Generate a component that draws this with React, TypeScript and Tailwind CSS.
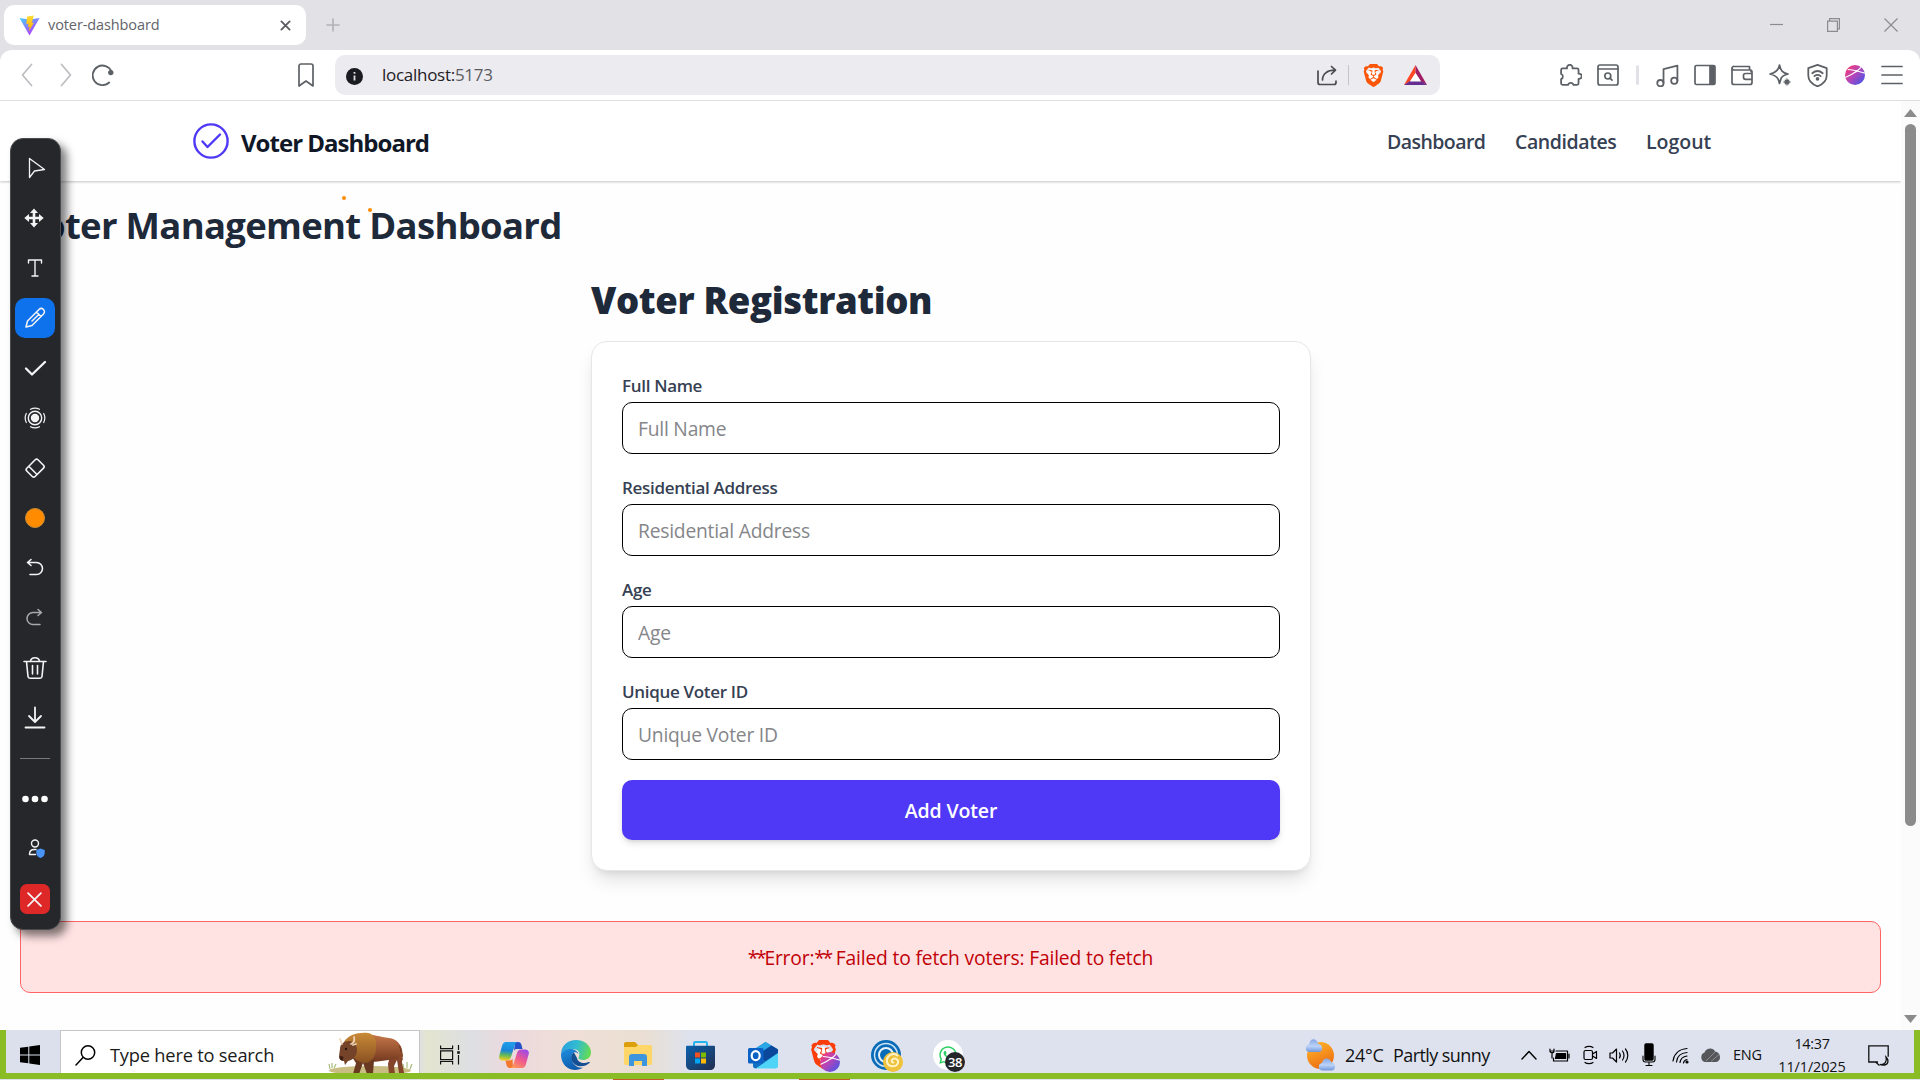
import type { ReactNode } from "react";
import { SiBrave } from "react-icons/si";
import { FaWhatsapp } from "react-icons/fa";

const stroke = { fill: "none", stroke: "currentColor", strokeLinecap: "round", strokeLinejoin: "round" } as const;

/* ---------- Browser chrome ---------- */

function ViteLogo() {
  return (
    <svg width="21" height="21" viewBox="0 0 21 21">
      <defs>
        <linearGradient id="viteA" x1="0" y1="0" x2="0.7" y2="1">
          <stop offset="0" stopColor="#41d1ff" />
          <stop offset="1" stopColor="#bd34fe" />
        </linearGradient>
        <linearGradient id="viteB" x1="0" y1="0" x2="0" y2="1">
          <stop offset="0" stopColor="#ffdd35" />
          <stop offset="1" stopColor="#ffa800" />
        </linearGradient>
      </defs>
      <path d="M0.5 3 L10.5 4.6 L20.6 3 L10.5 20.5 Z" fill="url(#viteA)" />
      <path d="M14.8 0.5 L8 1.6 L7.3 9.2 L9.6 8.8 L8.8 12 L10.6 11.6 L9.8 16.5 L15 7.6 L12.8 8 L14.8 0.5Z" fill="url(#viteB)" />
    </svg>
  );
}

function TabStrip() {
  return (
    <div className="flex h-[50px] items-start bg-[#e2e1e6] pl-1 pt-[5px]">
      <div className="flex h-10 w-[302px] items-center rounded-[10px] bg-white pl-[15px] pr-[15px]">
        <ViteLogo />
        <span className="ml-[8px] flex-1 whitespace-nowrap text-[14.5px] tracking-[-0.1px] text-[#62636a]">voter-dashboard</span>
        <svg width="11" height="11" viewBox="0 0 12 12" className="text-[#5c5d63]" {...stroke} strokeWidth="2">
          <path d="M1.5 1.5l9 9M10.5 1.5l-9 9" />
        </svg>
      </div>
      <svg width="14" height="14" viewBox="0 0 14 14" className="ml-5 mt-[13px] text-[#b2b1b6]" {...stroke} strokeWidth="1.6">
        <path d="M7 1v12M1 7h12" />
      </svg>
      <div className="ml-auto flex h-[40px] items-center gap-[44px] pr-[22px] text-[#8b8b90]">
        <svg width="13" height="13" viewBox="0 0 13 13" stroke="currentColor" strokeWidth="1.2"><path d="M0 5.5h13" /></svg>
        <svg width="13" height="14" viewBox="0 0 13 14" fill="none" stroke="currentColor" strokeWidth="1.2">
          <path d="M.6 3.1h9.8v10.3H.6zM2.6 3V.6h9.8v10.3h-2" />
        </svg>
        <svg width="14" height="14" viewBox="0 0 14 14" stroke="currentColor" strokeWidth="1.2"><path d="M.5.5l13 13M13.5.5l-13 13" /></svg>
      </div>
    </div>
  );
}

function Ico({ children, w = 22, sw = 1.7 }: { children: ReactNode; w?: number; sw?: number }) {
  return (
    <svg width={w} height={w} viewBox="0 0 22 22" {...stroke} strokeWidth={sw}>
      {children}
    </svg>
  );
}

function Cell({ children }: { children: ReactNode }) {
  return <div className="flex w-[37.5px] justify-center">{children}</div>;
}

function GradientBall({ size, id }: { size: number; id: string }) {
  return (
    <svg width={size} height={size} viewBox="0 0 22 22">
      <defs>
        <linearGradient id={id} x1="0" y1="0.1" x2="0.9" y2="0.9">
          <stop offset="0" stopColor="#fb3a6d" />
          <stop offset="0.5" stopColor="#b545b8" />
          <stop offset="1" stopColor="#4a55e6" />
        </linearGradient>
        <clipPath id={id + "c"}><circle cx="11" cy="11" r="11" /></clipPath>
      </defs>
      <circle cx="11" cy="11" r="11" fill={`url(#${id})`} />
      <g clipPath={`url(#${id}c)`} stroke="#fff" strokeWidth="1.2" fill="none">
        <path d="M0 14C6 11 13 8 18 2M3 5c6 0 12 2 19 4M9 9l6-3" />
      </g>
    </svg>
  );
}

function AddressBar() {
  return (
    <div className="bg-[#e2e1e6]">
      <div className="flex h-[51px] items-center rounded-t-[12px] border-b border-[#dfdfe3] bg-white text-[#5d6166]">
        <svg width="12" height="24" viewBox="0 0 12 24" className="ml-[21px] text-[#bcbdc0]" {...stroke} strokeWidth="1.7"><path d="M10.5 1.5L1.5 12l9 10.5" /></svg>
        <svg width="12" height="24" viewBox="0 0 12 24" className="ml-[27px] text-[#bcbdc0]" {...stroke} strokeWidth="1.7"><path d="M1.5 1.5l9 10.5-9 10.5" /></svg>
        <svg width="22" height="22" viewBox="0 0 22 22" className="ml-[20px]" {...stroke} strokeWidth="1.8">
          <path d="M19.5 7.5A9.8 9.8 0 1 0 17.2 18.5" />
          <circle cx="18.8" cy="8.6" r="1.8" fill="currentColor" />
        </svg>
        <svg width="16" height="24" viewBox="0 0 16 24" className="ml-[184px]" {...stroke} strokeWidth="1.7">
          <path d="M1 3a2 2 0 0 1 2-2h10a2 2 0 0 1 2 2v20l-7-5-7 5z" />
        </svg>
        <div className="ml-[21px] flex h-10 w-[1105px] items-center rounded-[10px] bg-[#ecebf0] pl-[11px] pr-[13px]">
          <svg width="17" height="17" viewBox="0 0 17 17" className="mt-0.5">
            <circle cx="8.5" cy="8.5" r="8.5" fill="#1b1c21" />
            <path d="M8.5 7.5v5M8.5 4v1.7" stroke="#dedee2" strokeWidth="1.8" />
          </svg>
          <span className="ml-[19px] flex-1 whitespace-nowrap text-[17px] tracking-[-0.28px] text-[#1f2024]">
            localhost:<span className="text-[#5b5c62]">5173</span>
          </span>
          <svg width="21" height="21" viewBox="0 0 21 21" className="text-[#4a4c52]" {...stroke} strokeWidth="1.7">
            <path d="M1 6v11.5a2 2 0 0 0 2 2h14a2 2 0 0 0 2-2V16M5.5 15C5.5 9 10 5.2 18 5.2M14.5 1.5l4 3.700-4 3.800" />
          </svg>
          <div className="ml-[10px] h-5 w-px bg-[#c4c4ca]" />
          <div className="relative ml-[13px] flex h-6 w-[22px] items-center justify-center">
            <div className="absolute h-3 w-3 rounded-full bg-white" />
            <SiBrave size={23} className="relative shrink-0 text-[#fb5607]" />
          </div>
          <svg width="23" height="20" viewBox="0 0 23 20" className="ml-[20px]">
            <path d="M11.5 0v8L6 16.5 0 20z" fill="#ff4724" />
            <path d="M11.5 0L23 20l-6-3.5L11.5 8z" fill="#9e1f63" />
            <path d="M0 20l6-4h11l6 4z" fill="#662d91" />
            <path d="M11.5 8l5.500 8.500H6z" fill="#fff" />
          </svg>
        </div>
        <div className="ml-auto flex items-center pr-[9px]">
          <Cell>
            <Ico w={23}><path d="M3.500 4.200h4.200a2.700 2.700 0 1 1 5.200 0h4.300a1.500 1.500 0 0 1 1.500 1.500v3.600a2.500 2.500 0 1 1 0 4.900v4.300a1.500 1.500 0 0 1-1.500 1.500h-3.500a2.500 2.500 0 0 0-4.900 0H3.500A1.500 1.500 0 0 1 2 18.500v-4a2.600 2.600 0 0 0 0-4.900V5.700a1.500 1.500 0 0 1 1.500-1.500z" /></Ico>
          </Cell>
          <Cell>
            <Ico><rect x="1" y="1" width="20" height="20" rx="2" /><path d="M1 5h20" /><circle cx="10.8" cy="12" r="3" /><path d="M13 14.200l2 2" /></Ico>
          </Cell>
          <div className="flex w-[22px] justify-center"><div className="h-5 w-[3px] rounded bg-[#e2e1e8]" /></div>
          <Cell><Ico w={23}><circle cx="4.2" cy="18.300" r="3" /><circle cx="17.5" cy="16" r="3" /><path d="M7.200 18V5l13.300-3.500V16" /></Ico></Cell>
          <Cell><Ico><rect x="1" y="1.500" width="20" height="19" rx="1.500" /><path d="M16 2h4v18h-4z" fill="currentColor" /></Ico></Cell>
          <Cell><Ico><path d="M20 7.500V6H3a2 2 0 0 1-2-2M18.500 6V2.500H3A1.700 1.700 0 0 0 1 4v14.500a2 2 0 0 0 2 2h16a2 2 0 0 0 2-2V8a2 2 0 0 0-2-2M21 9.500h-6.500a2 2 0 0 0-2 2v1.800a2 2 0 0 0 2 2H21" /></Ico></Cell>
          <Cell>
            <Ico>
              <path d="M10.500 1c1 5.500 3 7.800 8.500 9-3.500.8-5.500 1.800-6.800 4L10.500 19.500C9.500 14 7.500 11.500 1 10c6-1 8.500-3.500 9.500-9z" />
              <path d="M18 15v6M15 18h6M16.300 16.300l3.400 3.400M19.700 16.300l-3.400 3.400" strokeWidth="1.300" />
            </Ico>
          </Cell>
          <Cell>
            <Ico w={23}><path d="M11 .8l8.800 3.200v7c0 4.500-3.500 8.300-8.800 10.400C5.700 19.300 2.200 15.500 2.200 11V4z" /><path d="M6 8.800c3-2.500 7-2.500 10 0M8 11.600c2-1.600 4-1.600 6 0" /><circle cx="11" cy="14.300" r=".9" fill="currentColor" /></Ico>
          </Cell>
          <Cell><GradientBall size={20} id="ballTop" /></Cell>
          <Cell><Ico><path d="M1 2.500h20M1 11h20M1 19.500h20" /></Ico></Cell>
        </div>
      </div>
    </div>
  );
}

/* ---------- Web page ---------- */

const links = [
  { label: "Dashboard", cls: "w-[98px] tracking-[-0.55px]" },
  { label: "Candidates", cls: "w-[101px] tracking-[-0.42px]" },
  { label: "Logout", cls: "w-[65px] tracking-[0px]" },
];

function NavBar() {
  return (
    <nav className="flex h-20 shrink-0 items-center bg-white pl-[193px] pr-[190px] shadow-[0_1px_3px_rgba(0,0,0,0.14),0_1px_2px_rgba(0,0,0,0.1)]">
      <svg width="36" height="36" viewBox="0 0 36 36" className="text-[#4f39f6]" {...stroke} strokeWidth="2.4">
        <circle cx="18" cy="18" r="16.6" />
        <path d="M9.500 18.500l5 5.500L27 11.500" />
      </svg>
      <span className="ml-[12px] mt-[3px] whitespace-nowrap text-[24px] font-bold tracking-[-0.98px] text-[#101828]">Voter Dashboard</span>
      <div className="ml-auto mt-[2px] flex gap-[30px] text-[19.5px] font-semibold text-[#364153]">
        {links.map((l) => (
          <a key={l.label} className={"whitespace-nowrap " + l.cls}>{l.label}</a>
        ))}
      </div>
    </nav>
  );
}

const fields = ["Full Name", "Residential Address", "Age", "Unique Voter ID"];

function VoterForm() {
  return (
    <form className="flex h-[530px] w-[720px] flex-col rounded-[16px] border border-[#e5e7eb] bg-white px-[30px] pt-[30px] shadow-[0_12px_19px_-4px_rgba(0,0,0,0.12),0_5px_8px_-5px_rgba(0,0,0,0.12)]">
      {fields.map((f) => (
        <label key={f} className="flex h-[102px] flex-col">
          <span className="h-[30px] pt-px text-[17px] font-semibold leading-[25px] tracking-[-0.32px] text-[#364153]">{f}</span>
          <input
            placeholder={f}
            className="h-[52px] w-full rounded-[10px] border border-black bg-white px-[15px] pt-px text-[19.25px] tracking-[-0.22px] outline-none placeholder:text-[#85868a]"
          />
        </label>
      ))}
      <button type="button" className="h-[60px] w-full rounded-[10px] bg-[#4f39f6] pt-0.5 text-[19.5px] font-semibold tracking-[-0.15px] text-white shadow-[0_4px_7px_-1px_rgba(0,0,0,0.13),0_2px_4px_-2px_rgba(0,0,0,0.12)]">
        Add Voter
      </button>
    </form>
  );
}

function PageContent() {
  return (
    <main className="flex min-w-0 flex-1 flex-col overflow-hidden bg-[#fefefe]">
      <NavBar />
      <div className="flex flex-col px-5 pt-[19px]">
        <h1 className="h-[50px] whitespace-nowrap text-[36.5px] font-bold leading-[50px] tracking-[-0.7px] text-[#1e2939]">Voter Management Dashboard</h1>
        <div className="ml-[571px] mt-[25px] flex w-[720px] flex-col">
          <h2 className="h-[66px] whitespace-nowrap text-[36.5px] font-extrabold leading-[50px] tracking-[-0.36px] text-[#1e2939]">Voter Registration</h2>
          <VoterForm />
        </div>
        <div className="mt-[50px] flex h-[72px] w-[1861px] items-center justify-center rounded-[10px] border border-[#ff6467] bg-[#ffe2e2] pt-0.5 text-[19.25px] tracking-[-0.17px] text-[#c10007]">
          <p>
            <span className="tracking-[-2.3px]">**</span>Error:<span className="tracking-[-2.3px]">**</span> Failed to fetch voters: Failed to fetch
          </p>
        </div>
      </div>
    </main>
  );
}

function ScrollBar() {
  return (
    <div className="flex w-[19px] flex-col items-center bg-[#fbfbfb]">
      <svg width="13" height="8" viewBox="0 0 13 8" className="mt-[8px] shrink-0" fill="#8b8b8b"><path d="M6.500 0L13 8H0z" /></svg>
      <div className="mt-[7px] h-[702px] w-[11px] shrink-0 rounded-full bg-[#8b8b8b]" />
      <svg width="13" height="8" viewBox="0 0 13 8" className="mb-[7px] mt-auto shrink-0" fill="#8b8b8b"><path d="M6.500 8L0 0h13z" /></svg>
    </div>
  );
}

/* ---------- Annotation tool bar ---------- */

function Slot({ children }: { children: ReactNode }) {
  return <div className="flex h-[50px] items-center justify-center">{children}</div>;
}

function Tool({ children, sw = 1.6 }: { children: ReactNode; sw?: number }) {
  return (
    <Slot>
      <svg width="24" height="24" viewBox="0 0 24 24" {...stroke} strokeWidth={sw}>{children}</svg>
    </Slot>
  );
}

function AnnotationBar() {
  return (
    <div className="absolute left-[10px] top-[138px] h-[792px] w-[51px] rounded-[13px] border border-[#4b4c50] bg-[#26272b] pr-[2px] pt-[4px] text-[#f4f4f5] shadow-[6px_6px_9px_rgba(0,0,0,0.5)]">
      <Tool sw={1.3}><path d="M6.500 2.500v19l5-6.500 10-1.500z" /></Tool>
      <Slot>
        <svg width="20" height="20" viewBox="0 0 20 20" fill="currentColor" className="mr-0.5">
          <path d="M10 .5l4 4.500h-2.700v3.700H15V6l4.700 4-4.700 4v-2.700h-3.700V15H14l-4 4.500L6 15h2.700v-3.700H5V14L.3 10 5 6v2.700h3.700V5H6z" />
        </svg>
      </Slot>
      <Tool sw={1.4}><path d="M5.500 7V4h13v3M12 4v16M9 20h6" /></Tool>
      <Slot>
        <div className="flex h-10 w-10 shrink-0 items-center justify-center rounded-[10px] bg-[#0e72ed]">
          <svg width="24" height="24" viewBox="0 0 24 24" {...stroke} strokeWidth="1.5">
            <path d="M3 21l1.500-6L16 3.500c1.500-1.500 3.500-1 4.500 0s1.500 3 0 4.500L9 19.500zM13.500 6l4.500 4.500M16 8.200L9 15" />
          </svg>
        </div>
      </Slot>
      <Tool sw={2.3}><path d="M3 12.500l6 6L22 6" /></Tool>
      <Tool sw={1.2}>
        <circle cx="12" cy="12" r="3.6" fill="currentColor" />
        <circle cx="12" cy="12" r="6.7" strokeWidth="1.4" />
        <path d="M7.500 3.300a10 10 0 0 1 9 0M7.500 20.700a10 10 0 0 0 9 0M3.300 7.500a10 10 0 0 0 0 9M20.700 7.500a10 10 0 0 1 0 9" />
      </Tool>
      <Tool><path d="M3.800 12.200l8.400-8.400c.8-.8 2-.8 2.800 0L20.500 9.300c.8.800.8 2 0 2.800l-8.400 8.400c-.8.800-2 .8-2.800 0l-5.500-5.500c-.8-.8-.8-2 0-2.800zM6 10.500l8 8" /></Tool>
      <Slot><div className="h-5 w-5 rounded-full border border-[#c98b35] bg-[#ff8c00]" /></Slot>
      <Tool><path d="M8 3.500L4.500 6.500 8 9.500M5 6.500h8.500a5.700 5.700 0 0 1 0 12H7" /></Tool>
      <Slot>
        <svg width="24" height="24" viewBox="0 0 24 24" className="text-[#a9a9ad]" {...stroke} strokeWidth="1.5">
          <path d="M15 3.500L18.500 6.500 15 9.500M18 6.500h-8a5.700 5.700 0 0 0 0 12h7" />
        </svg>
      </Slot>
      <Tool><path d="M1 5.500h22M3.500 5.500L5 20.500c.1 1 .9 1.700 2 1.700h10c1.100 0 1.900-.7 2-1.700L20.500 5.500M7.500 5c.5-2.500 2.500-3.300 4.500-3.300S16 2.500 16.500 5M9.500 9.500V18M14.500 9.500V18" /></Tool>
      <Tool sw={1.8}><path d="M12 1.500v14M6 10l6 6 6-6M2.500 21.500h19" /></Tool>
      <div className="mx-auto mt-[15px] h-px w-[30px] bg-[#77787c]" />
      <div className="mt-[15px]" />
      <Slot>
        <svg width="26" height="8" viewBox="0 0 26 8" fill="#fff"><circle cx="3.5" cy="4" r="3.3" /><circle cx="13" cy="4" r="3.3" /><circle cx="22.5" cy="4" r="3.3" /></svg>
      </Slot>
      <Slot>
        <svg width="24" height="24" viewBox="0 0 24 24" {...stroke} strokeWidth="1.4">
          <circle cx="12" cy="6.5" r="3.5" />
          <path d="M13 12.500h-1.500c-3 0-5 1.500-5 4.500v.5h6" />
          <path d="M17.500 11.500l4.200 1.600v3c0 2.500-1.900 4.200-4.200 5-2.300-.8-4.200-2.500-4.200-5v-3z" fill="#4a94f8" stroke="none" />
        </svg>
      </Slot>
      <Slot>
        <div className="flex h-[30px] w-[30px] items-center justify-center rounded-[7px] bg-[#de2828]">
          <svg width="15" height="15" viewBox="0 0 14 14" {...stroke} strokeWidth="1.6"><path d="M1 1l12 12M13 1L1 13" /></svg>
        </div>
      </Slot>
    </div>
  );
}

/* ---------- Windows task bar ---------- */

function Bison() {
  return (
    <svg width="86" height="42" viewBox="0 0 86 42">
      <defs>
        <linearGradient id="bisonBody" x1="0" y1="0" x2="0" y2="1">
          <stop offset="0" stopColor="#c8784a" />
          <stop offset="1" stopColor="#73391f" />
        </linearGradient>
        <linearGradient id="bisonMane" x1="0" y1="0" x2="0" y2="1">
          <stop offset="0" stopColor="#c98a38" />
          <stop offset="1" stopColor="#8a5122" />
        </linearGradient>
      </defs>
      <ellipse cx="42" cy="38.500" rx="41" ry="4.500" fill="#c9bd83" />
      <path d="M2 37l-1-5M4 36V31M6 36l2-4M76 37l-1-5M79 36V30M82 37l2-5" stroke="#a9bd7a" strokeWidth="1.2" />
      <path d="M62 24l-2 8 1 10h6l-1-8 3-6 2 13h5l-2-11 1-8z" fill="#84452a" />
      <path d="M36 2c9 0 16 3 25 4 8 1 12 6 12 13 1 5-2 8-6 8-9 1-18 3-26 3z" fill="url(#bisonBody)" />
      <path d="M71 13c3 3 3 8 3 12M72 24l-1 3 3 0z" stroke="#8a4a2b" strokeWidth="1.5" fill="#4f2a1a" />
      <path d="M24 25l4 6-3 11h6l4-11 4 11h6l1-14z" fill="#6a3921" />
      <path d="M16 10c4-7 14-10 24-9 6 1 9 7 8 14 0 9-4 15-10 16-6 0-10-3-14-7z" fill="url(#bisonMane)" />
      <path d="M21 9c-5 0-9 3-9 8l-1 7c0 3 2 5 5 5l1 4 3-4c5-1 9-5 9-11 0-5-3-9-8-9z" fill="#75432a" />
      <path d="M14 12l-2-5M23 12c3-1 4-3 3-7M25 13l3-1" stroke="#efd2b4" strokeWidth="1.8" strokeLinecap="round" fill="none" />
      <circle cx="18" cy="17" r="1.2" fill="#27150e" />
      <path d="M11.500 25c1-2 4-1 4 1l-1 2.500c-2 0-3-1-3-3.500z" fill="#3c2015" />
    </svg>
  );
}

function TaskViewIcon() {
  return (
    <svg width="20" height="20" viewBox="0 0 20 20" fill="none" stroke="#111" strokeWidth="1.2">
      <path d="M.6.500v3.200h12V.500M.6 5.800h12v8.800H.6zM.6 19.500v-3h12v3M18.500 0v5M18.500 10v9.500" />
      <path d="M17.200 6.200h2.600v2.600h-2.600z" fill="#111" stroke="none" />
    </svg>
  );
}

function Copilot() {
  return (
    <svg width="30" height="30" viewBox="0 0 30 30">
      <defs>
        <linearGradient id="cpA" x1="0.3" y1="0" x2="0.2" y2="1"><stop offset="0.1" stopColor="#1f9be8" /><stop offset="0.45" stopColor="#1b86d8" /><stop offset="0.7" stopColor="#62b95a" /><stop offset="1" stopColor="#ffd01c" /></linearGradient>
        <linearGradient id="cpB" x1="0.8" y1="0" x2="0.2" y2="1"><stop offset="0" stopColor="#9a4bea" /><stop offset="0.5" stopColor="#f0598f" /><stop offset="1" stopColor="#ff9a55" /></linearGradient>
      </defs>
      <path d="M16 2h3c2 0 3 1 3.500 3l1 4h-5c-2 0-3 .500-3.500 2z" fill="#2351c9" />
      <path d="M7 2h12c-2 0-3 2-3.500 4L12 17c-.6 2-2 3.500-4 3.500H4c-3 0-4.500-2-3.600-5L3 6c.7-2.400 2-4 4-4z" fill="url(#cpA)" />
      <path d="M14 28h-3c-2 0-3-1-3.500-3l-1-4.500H10c2 0 3-1 3.500-2z" fill="#f4772f" />
      <path d="M23 28H11c2 0 3-2 3.500-4L18 13c.6-2 2-3.500 4-3.500h4c3 0 4.500 2 3.600 5L27 24c-.7 2.400-2 4-4 4z" fill="url(#cpB)" />
    </svg>
  );
}

function Edge() {
  return (
    <svg width="30" height="30" viewBox="0 0 30 30">
      <defs>
        <linearGradient id="edA" x1="0" y1="0.3" x2="1" y2="0.5"><stop offset="0" stopColor="#2a9fe0" /><stop offset="0.5" stopColor="#32bcd0" /><stop offset="1" stopColor="#66dc50" /></linearGradient>
        <linearGradient id="edB" x1="0" y1="0" x2="0.4" y2="1"><stop offset="0" stopColor="#1f8fe0" /><stop offset="1" stopColor="#0f5cae" /></linearGradient>
      </defs>
      <path d="M0 14C.5 5 7 0 15 0c9 0 15 6 15 12.500 0 5-4 7.500-8 7.500-3 0-5-1-4.500-2.500 2-3 1-8-5-8.500C7 8.500 2 10 0 14z" fill="url(#edA)" />
      <path d="M0 14C2 9.500 7 8.500 11 9c3.500.500 6 3 6.500 5-4-4-7.500 0-7 4 .600 6 6 11 12 9.500C17 31 10 30.500 5.500 27 1.500 23.500 0 19 0 14z" fill="url(#edB)" />
      <path d="M13 12.500c-4 2-3.800 8.500 1 12 5 3.500 11 1.500 14.500-1.500.6-.5 0-1.200-.8-.9-5 2.300-11 .4-11.700-4.100z" fill="#124f93" />
    </svg>
  );
}

function Explorer() {
  return (
    <svg width="28" height="26" viewBox="0 0 28 26">
      <path d="M0 2C0 .9.8 0 2 0h9l3 3v5H0z" fill="#dd9f0c" />
      <path d="M0 5h12l2-2h12c1.200 0 2 .8 2 2v16c0 1-.8 2-2 2H2c-1.200 0-2-1-2-2z" fill="#ffd667" />
      <path d="M5 24V15c0-1.700 1-3 3-3h12c2 0 3 1.300 3 3v9h-5v-5h-8v5z" fill="#3d96dd" />
    </svg>
  );
}

function Store() {
  return (
    <svg width="29" height="30" viewBox="0 0 29 30">
      <defs><linearGradient id="stA" x1="0" y1="0" x2="1" y2="1"><stop offset="0" stopColor="#0a62ad" /><stop offset="1" stopColor="#232c4e" /></linearGradient></defs>
      <path d="M8 6V3.200C8 2.400 8.500 2 9.200 2h10.600c.7 0 1.200.4 1.200 1.200V6" fill="none" stroke="#25b4ee" strokeWidth="2" />
      <path d="M0 7c0-.8.5-1.200 1.200-1.200h26.600c.7 0 1.200.4 1.200 1.200v18c0 3-2 5-5 5H5c-3 0-5-2-5-5z" fill="url(#stA)" />
      <path d="M9 12.500h5v5H9z" fill="#f25022" /><path d="M15 12.500h5v5h-5z" fill="#7fba00" />
      <path d="M9 18.500h5v5H9z" fill="#00a4ef" /><path d="M15 18.500h5v5h-5z" fill="#ffb900" />
    </svg>
  );
}

function Outlook() {
  return (
    <svg width="30" height="27" viewBox="0 0 30 27">
      <path d="M5 8L17.500 0 30 7.500V14L8 26.500C6 26.500 5 25.500 5 24z" fill="#1470c0" />
      <path d="M5 8L17.500 0l6 3.500L9 13z" fill="#28a7e4" />
      <path d="M23.500 3.500L30 7.500v3.500L17 19l-8-6z" fill="#0b479b" />
      <path d="M30 11v13c0 1.500-1 2.500-2.500 2.500H8z" fill="#4fd3f7" />
      <rect y="6" width="15.500" height="15.500" rx="1.5" fill="#0b62c4" />
      <ellipse cx="7.700" cy="13.700" rx="4" ry="4.500" fill="none" stroke="#fff" strokeWidth="2.2" />
    </svg>
  );
}

function BraveApp() {
  return (
    <div className="relative mt-0.5 h-[32px] w-[30px]">
      <div className="absolute left-[6px] top-[7px] h-3.5 w-3.5 rounded-full bg-white" />
      <SiBrave size={29} className="absolute left-[-1px] top-0 text-[#fb3d0c]" />
      <div className="absolute bottom-0 right-0"><GradientBall size={20} id="ballTask" /></div>
    </div>
  );
}

function CircleApp() {
  return (
    <svg width="32" height="32" viewBox="0 0 32 32" className="mt-0.5">
      <circle cx="15" cy="15" r="15" fill="#0a6cb8" />
      <circle cx="15" cy="15" r="11.5" fill="none" stroke="#cfe4f4" strokeWidth="1.5" />
      <circle cx="15" cy="15" r="7" fill="none" stroke="#e8f2fa" strokeWidth="2" />
      <circle cx="22" cy="22" r="10" fill="#efc13c" />
      <path d="M27 16c-4-4-12-1-11 6 1 5 9 6 11 1 1-4-4-6-6-3-1 2 1 3 2 2" fill="none" stroke="#fff3c8" strokeWidth="2" />
    </svg>
  );
}

function WhatsAppApp() {
  return (
    <div className="relative mt-0.5 h-[32px] w-[32px]">
      <div className="absolute left-0 top-0 flex h-[30px] w-[30px] items-center justify-center rounded-full bg-white">
        <FaWhatsapp size={20} className="text-[#2bcf62]" />
      </div>
      <div className="absolute bottom-0 right-0 flex h-5 w-5 items-center justify-center rounded-full bg-[#25262a] text-[13px] font-semibold leading-none tracking-[-0.5px] text-white">38</div>
    </div>
  );
}

const apps: { id: string; icon: ReactNode }[] = [
  { id: "copilot", icon: <Copilot /> },
  { id: "edge", icon: <Edge /> },
  { id: "explorer", icon: <Explorer /> },
  { id: "store", icon: <Store /> },
  { id: "outlook", icon: <Outlook /> },
  { id: "brave", icon: <BraveApp /> },
  { id: "circle", icon: <CircleApp /> },
  { id: "whatsapp", icon: <WhatsAppApp /> },
];

function Weather() {
  return (
    <svg width="31" height="34" viewBox="0 0 31 34">
      <defs>
        <linearGradient id="sun" x1="0.2" y1="0" x2="0.6" y2="1"><stop offset="0" stopColor="#ffb52a" /><stop offset="1" stopColor="#ec6b12" /></linearGradient>
        <linearGradient id="cloudFill" x1="0" y1="0" x2="0" y2="1"><stop offset="0" stopColor="#86a6e2" /><stop offset="0.55" stopColor="#bdd3f8" /><stop offset="1" stopColor="#7096da" /></linearGradient>
      </defs>
      <circle cx="15.500" cy="17.500" r="13.500" fill="url(#sun)" />
      <path d="M4 14a3.800 3.800 0 0 1 0-7.500C5 -.5 11.500 -.5 13.500 6c4.500 0 5 8 .5 8z" fill="url(#cloudFill)" />
      <path d="M17 32.500a3.800 3.800 0 0 1 0-7.500c1-6 7.500-6 9.500-.5 4.500 0 5 8 .5 8z" fill="url(#cloudFill)" />
    </svg>
  );
}

function TrayIcons() {
  const s = { ...stroke, strokeWidth: 1.4 };
  return (
    <div className="flex items-center text-black">
      <svg width="16" height="10" viewBox="0 0 16 10" {...s}><path d="M1 9l7-7.500L15 9" /></svg>
      <svg width="21" height="15" viewBox="0 0 21 15" className="ml-[12px]" {...s} strokeWidth="1.2">
        <path d="M7 3h11.500v10H4.500v-3M20 6v4M1 1v2.500C1 5 5 5 5 3.500V1M1 3h4M3 5v5" /><path d="M7.500 5.500h9v5h-10z" fill="currentColor" />
      </svg>
      <svg width="15" height="20" viewBox="0 0 15 20" className="ml-[13px]" {...s} strokeWidth="1.2"><rect x="1" y="5.500" width="8.500" height="9" rx="1.500" /><path d="M9.500 9l4-2.500v7L9.500 11M2 2.500c2-1.500 6-1.500 8 0M2 17.500c2 1.500 6 1.500 8 0" /></svg>
      <svg width="21" height="17" viewBox="0 0 21 17" className="ml-[11px]" {...s} strokeWidth="1.2"><path d="M1 6v5h2.500l4 4V2l-4 4zM10.500 6c1 1.500 1 3.500 0 5M13.500 4c2 2.500 2 6.500 0 9M16.500 2c3 3.500 3 9.500 0 13" /></svg>
      <svg width="14" height="24" viewBox="0 0 14 24" className="ml-[12px]" {...s}><rect x="3" y="1" width="8" height="16" rx="1" fill="currentColor" /><path d="M1 13v3.500C1 18 2 19 3.500 19h7c1.500 0 2.500-1 2.500-2.500V13M7 19v3.500M4 22.500h6" strokeWidth="1.1" /></svg>
      <svg width="17" height="17" viewBox="0 0 17 17" className="ml-[16px]" {...s} strokeWidth="1.2"><path d="M1 14C2 6.500 7.500 2 15 1.500M4.500 15C5 9.500 9 6 15 5.500M8 15.500c.5-3.500 3-6 7-6.500M11.500 16c.3-2 1.500-3 3.500-3.500" /><circle cx="15" cy="15" r="1" fill="currentColor" /></svg>
      <svg width="21" height="16" viewBox="0 0 21 16" className="ml-[11px]"><path d="M5 15a5 5 0 0 1-.5-9.500C6 1 13 0 15 4.500c6 .5 7 9.500 1 10.500z" fill="#56575b" /><path d="M6 14L15 5M11 14.500l8-7" stroke="#8b8c90" /></svg>
    </div>
  );
}

function TaskBar() {
  return (
    <footer className="relative h-[50px] shrink-0 bg-[linear-gradient(90deg,#dbe0ec_0%,#dbe0ec_21.5%,#e3e4cf_22.3%,#dddfe3_24.5%,#ebd9dd_26.5%,#efdfd6_30%,#eadfd2_33.5%,#dde2ee_36%,#dee2ee_100%)]">
      <div className="flex h-[43px] items-center">
        <div className="flex w-[60px] shrink-0 justify-center pt-[6px]">
          <svg width="20" height="20" viewBox="0 0 20 20"><path d="M0 2.800L8.300 1.700v7.800H0zM9.300 1.500L20 0v9.500H9.300zM0 10.500h8.300v7.800L0 17.200zM9.300 10.500H20V20L9.300 18.500z" /></svg>
        </div>
        <div className="flex h-[43px] w-[360px] shrink-0 items-center border border-b-0 border-[#c5c5c8] bg-white pl-[14px] text-black">
          <svg width="21" height="21" viewBox="0 0 21 21" className="mt-[7px]" {...stroke} strokeWidth="1.5"><circle cx="13" cy="7.500" r="6.7" /><path d="M8 12.500L1 20" /></svg>
          <span className="ml-[14px] mt-[5px] whitespace-nowrap text-[18.25px] tracking-[-0.2px] text-[#1b1b1b]">Type here to search</span>
          <div className="ml-auto mr-[5px] mt-[2px]"><Bison /></div>
        </div>
        <div className="flex w-[60px] shrink-0 justify-center pt-[6px]"><TaskViewIcon /></div>
        <div className="flex h-[50px] shrink-0 self-start pl-[3px]">
          {apps.map((a) => (
            <div key={a.id} className="flex h-[50px] w-[62.15px] items-center justify-center">
              {a.icon}
            </div>
          ))}
        </div>
        <div className="ml-auto flex h-[50px] items-center self-start pr-[31px] text-[#111]">
          <Weather />
          <span className="ml-[9px] w-[39px] whitespace-nowrap text-[18px] tracking-[-0.3px]">24°C</span>
          <span className="ml-[9px] w-[97px] whitespace-nowrap text-[18px] tracking-[-0.58px]">Partly sunny</span>
          <div className="ml-[31px]"><TrayIcons /></div>
          <span className="ml-[12px] w-[30px] text-[14.5px] tracking-[-0.2px]">ENG</span>
          <div className="ml-[15px] flex w-[68px] flex-col items-center text-[14.4px] leading-[23px]">
            <span className="tracking-[-0.3px]">14:37</span>
            <span className="tracking-[-0.1px]">11/1/2025</span>
          </div>
          <svg width="21" height="21" viewBox="0 0 21 21" className="ml-[22px]" fill="none" stroke="#111" strokeWidth="1.3"><path d="M10 17H.8V.8h19.400v11M7.500 17l4 3.500M12 19.500c5 .500 7-3 6-7.500 3 3 2.500 7.500-1.500 8-2 .3-3.500 0-4.500-.500z" /></svg>
        </div>
      </div>
      {/* capture frame drawn over the bar */}
      <div className="pointer-events-none absolute inset-x-0 bottom-px top-0 border-x-[6px] border-b-[6px] border-[#8abc26]" />
      <div className="absolute bottom-0 left-[613px] h-px w-[51px] bg-[#c65a2c]" />
      <div className="absolute bottom-0 left-[799px] h-px w-[51px] bg-[#c65a2c]" />
    </footer>
  );
}

export default function App() {
  return (
    <div className="relative flex h-[1080px] w-[1920px] flex-col overflow-hidden bg-white font-['Open_Sans','Noto_Sans',sans-serif]">
      <TabStrip />
      <AddressBar />
      <div className="flex min-h-0 flex-1">
        <PageContent />
        <ScrollBar />
      </div>
      <TaskBar />
      <div className="absolute left-[342px] top-[196px] h-[4px] w-[4px] rounded-full bg-[#ff8c00]" />
      <div className="absolute left-[368px] top-[208px] h-[4px] w-[4px] rounded-full bg-[#ff8c00]" />
      <AnnotationBar />
    </div>
  );
}
